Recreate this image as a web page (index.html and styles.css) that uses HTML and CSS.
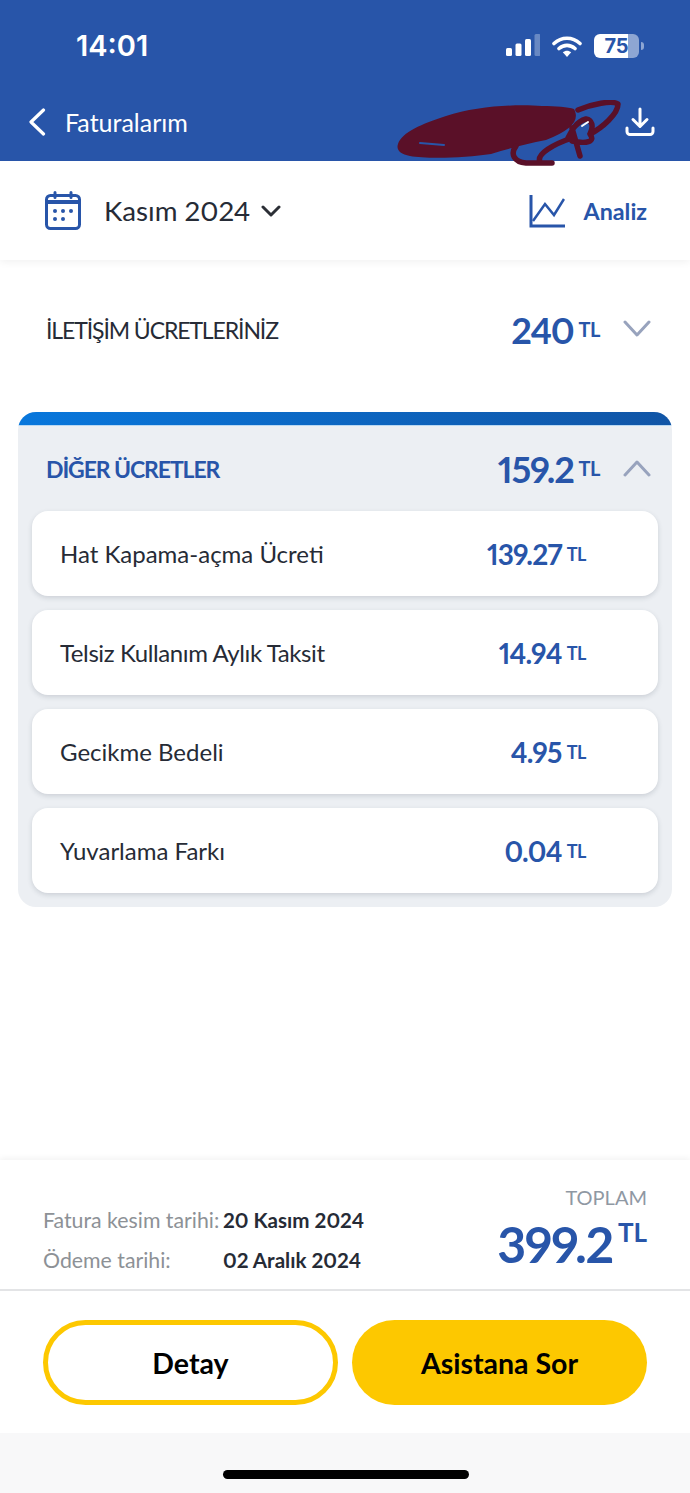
FILE: index.html
```html
<!DOCTYPE html>
<html lang="tr">
<head>
    <meta charset="UTF-8">
    <meta name="viewport" content="width=device-width, initial-scale=1.0">
    <title>Faturalarım</title>
    <link rel="stylesheet" href="styles.css">
</head>
<body>
    <div class="page">
        <header class="top">
            <div class="status">
                <span class="clock">14:01</span>
                <div class="status-icons">
                    <svg width="34" height="24" viewBox="0 0 34 24">
                        <rect x="0" y="14" width="6" height="8" rx="1.5" fill="#fff"/>
                        <rect x="9.5" y="9.5" width="6" height="12.500" rx="1.500" fill="#fff"/>
                        <rect x="19" y="5" width="6" height="17" rx="1.500" fill="#fff"/>
                        <rect x="28.500" y="0" width="6" height="22" rx="1.500" fill="#fff" opacity="0.3"/>
                    </svg>
                    <svg class="wifi" width="30" height="23" viewBox="0 0 30 23">
                        <path d="M2 8.500C9.500 1.500 20.500 1.500 28 8.500M7 13.500C11.800 9.300 18.200 9.300 23 13.500" fill="none" stroke="#fff" stroke-width="3.600" stroke-linecap="round"/>
                        <path d="M10.800 17.300C13.300 15.200 16.700 15.200 19.200 17.300L15 22z" fill="#fff"/>
                    </svg>
                    <div class="battery">
                        <span class="battery-level">75</span>
                        <i class="battery-tip"></i>
                    </div>
                </div>
            </div>
            <div class="nav">
                <svg class="back" width="18" height="28" viewBox="0 0 18 28">
                    <path d="M15.500 2L3 14l12.500 12" fill="none" stroke="#fff" stroke-width="3.200" stroke-linecap="round" stroke-linejoin="round"/>
                </svg>
                <span class="nav-title">Faturalarım</span>
                <svg class="download" width="30" height="30" viewBox="0 0 30 30">
                    <path d="M15 2v17M8 12.500l7 7 7-7M2 21v3.500a3 3 0 0 0 3 3h20a3 3 0 0 0 3-3V21" fill="none" stroke="#fff" stroke-width="3" stroke-linecap="round" stroke-linejoin="round"/>
                </svg>
            </div>
            <svg class="scribble" width="225" height="66" viewBox="0 0 225 66">
                <path d="M2 44C6 32 26 24 50 16C80 6 120 4 146 6C160 6 172 7 178 9C184 20 176 30 150 40C130 44 115 48 95 54C70 58 30 59 14 56C4 54 0 50 2 44z" fill="#5a1028"/>
                <path d="M182 10C196 4 216 0 222 4C222 14 206 28 194 34C198 26 196 20 190 19C180 22 176 30 172 38M194 34C200 42 190 44 176 41M176 28L184 56M120 46C114 54 118 62 130 63H156M144 62C140 54 158 44 176 38" fill="none" stroke="#5a1028" stroke-width="5.500" stroke-linecap="round" stroke-linejoin="round"/>
                <path d="M24 43L48 45" fill="none" stroke="#2855a9" stroke-width="2" stroke-linecap="round"/>
                <path d="M186 26L192 22" fill="none" stroke="#fff" stroke-width="2" stroke-linecap="round"/>
            </svg>
        </header>

        <section class="period">
            <div class="period-left">
                <svg width="36" height="40" viewBox="0 0 36 40">
                    <rect x="1.500" y="4.500" width="33" height="33" rx="4" fill="none" stroke="#2855a9" stroke-width="3"/>
                    <path d="M1.500 11h33" stroke="#2855a9" stroke-width="4"/>
                    <path d="M10 1.500v5M26 1.500v5" stroke="#2855a9" stroke-width="3" stroke-linecap="round"/>
                    <g fill="#2855a9">
                        <circle cx="10" cy="20" r="2"/><circle cx="18" cy="20" r="2"/><circle cx="26" cy="20" r="2"/>
                        <circle cx="10" cy="28" r="2"/><circle cx="18" cy="28" r="2"/>
                    </g>
                </svg>
                <span class="period-name">Kasım 2024</span>
                <svg width="20" height="12" viewBox="0 0 20 12">
                    <path d="M2 2l8 8 8-8" fill="none" stroke="#2c2f36" stroke-width="3" stroke-linecap="round" stroke-linejoin="round"/>
                </svg>
            </div>
            <div class="period-right">
                <svg width="36" height="34" viewBox="0 0 36 34">
                    <path d="M2 1v31h34" fill="none" stroke="#2855a9" stroke-width="3"/>
                    <path d="M4 27L16 10l9 11L35 5" fill="none" stroke="#2855a9" stroke-width="2.500"/>
                </svg>
                <span class="analiz">Analiz</span>
            </div>
        </section>

        <section class="fee-row">
            <span class="fee-title">İLETİŞİM ÜCRETLERİNİZ</span>
            <div class="fee-total">
                <span class="amount-big">240</span><span class="tl">TL</span>
                <svg class="chev" width="28" height="18" viewBox="0 0 28 18">
                    <path d="M2 2l12 13L26 2" fill="none" stroke="#98a3bd" stroke-width="3" stroke-linecap="round" stroke-linejoin="round"/>
                </svg>
            </div>
        </section>

        <section class="card">
            <div class="card-strip"></div>
            <div class="card-head">
                <span class="card-title">DİĞER ÜCRETLER</span>
                <div class="fee-total">
                    <span class="amount-big">159.2</span><span class="tl">TL</span>
                    <svg class="chev" width="28" height="18" viewBox="0 0 28 18">
                        <path d="M2 16L14 3l12 13" fill="none" stroke="#98a3bd" stroke-width="3" stroke-linecap="round" stroke-linejoin="round"/>
                    </svg>
                </div>
            </div>
            <div class="items">
                <div class="item">
                    <span class="item-name">Hat Kapama-açma Ücreti</span>
                    <div><span class="item-amount">139.27</span><span class="item-tl">TL</span></div>
                </div>
                <div class="item">
                    <span class="item-name item-name-tight">Telsiz Kullanım Aylık Taksit</span>
                    <div><span class="item-amount">14.94</span><span class="item-tl">TL</span></div>
                </div>
                <div class="item">
                    <span class="item-name">Gecikme Bedeli</span>
                    <div><span class="item-amount">4.95</span><span class="item-tl">TL</span></div>
                </div>
                <div class="item">
                    <span class="item-name">Yuvarlama Farkı</span>
                    <div><span class="item-amount">0.04</span><span class="item-tl">TL</span></div>
                </div>
            </div>
        </section>

        <footer class="summary">
            <div class="summary-top">
                <div class="dates">
                    <div class="date-row"><span class="date-label">Fatura kesim tarihi:</span><span class="date-value">20 Kasım 2024</span></div>
                    <div class="date-row"><span class="date-label">Ödeme tarihi:</span><span class="date-value">02 Aralık 2024</span></div>
                </div>
                <div class="total">
                    <div class="total-label">TOPLAM</div>
                    <div class="total-value"><span class="total-num">399.2</span><span class="total-tl">TL</span></div>
                </div>
            </div>
            <div class="buttons">
                <button type="button" class="btn btn-outline">Detay</button>
                <button type="button" class="btn btn-fill">Asistana Sor</button>
            </div>
        </footer>

        <div class="home-area"><div class="home-bar"></div></div>
    </div>
</body>
</html>
```

FILE: styles.css
```css
* {
    box-sizing: border-box;
}
html, body {
    margin: 0;
    padding: 0;
}
body {
    font-family: Lato, "Open Sans", sans-serif;
    font-variant-numeric: proportional-nums;
    background: #fff;
    color: #262b36;
}
.page {
    width: 690px;
    height: 1493px;
    display: flex;
    flex-direction: column;
    position: relative;
    overflow: hidden;
}
.top {
    height: 161px;
    flex-shrink: 0;
    background: #2855a9;
    color: #fff;
    position: relative;
}
.status {
    height: 92px;
    padding: 28px 46px 0 76px;
    display: flex;
    justify-content: space-between;
    align-items: flex-start;
}
.clock {
    font-family: Inter, sans-serif;
    font-size: 29px;
    line-height: 36px;
    font-weight: 600;
}
.status-icons {
    display: flex;
    align-items: center;
    gap: 12px;
    padding-top: 6px;
}
.battery {
    display: flex;
    align-items: center;
    gap: 2px;
}
.battery-level {
    width: 45px;
    height: 24px;
    border-radius: 6px;
    background: linear-gradient(90deg, #fff 75%, #8ea6d3 75%);
    color: #2855a9;
    font-family: Inter, sans-serif;
    font-size: 20px;
    line-height: 24px;
    font-weight: 700;
    text-align: center;
}
.battery-tip {
    width: 3px;
    height: 8px;
    border-radius: 0 3px 3px 0;
    background: #8ea6d3;
}
.nav {
    height: 60px;
    padding: 0 35px 0 28px;
    display: flex;
    align-items: center;
}
.back {
    margin-right: 19px;
}
.nav-title {
    font-size: 25px;
    flex: 1;
}
.scribble {
    position: absolute;
    left: 396px;
    top: 100px;
    z-index: 2;
}
.period {
    height: 99px;
    flex-shrink: 0;
    padding: 0 43px 0 45px;
    display: flex;
    justify-content: space-between;
    align-items: center;
    background: #fff;
    box-shadow: 0 2px 8px rgba(0, 0, 0, 0.06);
}
.period-left, .period-right {
    display: flex;
    align-items: center;
}
.period-name {
    font-size: 27.700px;
    margin: 0 11px 0 23px;
}
.analiz {
    color: #2855a9;
    font-size: 23.300px;
    font-weight: 700;
    margin-left: 18px;
}
.fee-row {
    height: 152px;
    flex-shrink: 0;
    padding: 0 39px 12px 46px;
    display: flex;
    justify-content: space-between;
    align-items: center;
}
.fee-title {
    font-size: 23px;
    letter-spacing: -1.100px;
    color: #262b36;
}
.fee-total {
    display: flex;
    align-items: flex-start;
}
.amount-big {
    color: #2855a9;
    font-size: 36px;
    line-height: 40px;
    font-weight: 700;
    letter-spacing: -1.200px;
}
.tl {
    color: #2855a9;
    font-size: 20px;
    line-height: 38px;
    font-weight: 700;
    letter-spacing: -0.5px;
    margin-left: 5px;
}
.chev {
    margin: 10px 0 0 23px;
}
.card {
    width: 654px;
    height: 495px;
    flex-shrink: 0;
    margin-left: 18px;
    border-radius: 18px;
    background: #eceff3;
    overflow: hidden;
}
.card-strip {
    height: 14px;
    background: linear-gradient(90deg, #0877dc, #1155a6);
    border-bottom: 1px solid #b9d8f2;
}
.card-head {
    height: 85px;
    padding: 0 21px 0 28px;
    display: flex;
    justify-content: space-between;
    align-items: center;
}
.card-title {
    color: #2855a9;
    font-size: 23px;
    font-weight: 700;
    letter-spacing: -1.100px;
}
.items {
    padding: 0 14px;
    display: flex;
    flex-direction: column;
    gap: 14px;
}
.item {
    height: 85px;
    padding: 0 72px 0 28px;
    background: #fff;
    border-radius: 16px;
    box-shadow: 0 2px 5px rgba(40, 50, 70, 0.16);
    display: flex;
    justify-content: space-between;
    align-items: center;
}
.item-name {
    font-size: 24px;
}
.item-name-tight {
    letter-spacing: -0.4px;
}
.item-amount {
    color: #2855a9;
    font-size: 28px;
    font-weight: 700;
    letter-spacing: -0.8px;
}
.item-tl {
    color: #2855a9;
    font-size: 18px;
    font-weight: 700;
    letter-spacing: -0.4px;
    margin-left: 5px;
    vertical-align: 4px;
}
.summary {
    position: absolute;
    left: 0;
    right: 0;
    top: 1160px;
    height: 273px;
    background: #fff;
    box-shadow: 0 -2px 6px rgba(0, 0, 0, 0.05);
}
.summary-top {
    height: 131px;
    padding: 0 43px;
    display: flex;
    justify-content: space-between;
    border-bottom: 2px solid #e3e4e6;
}
.dates {
    padding-top: 50px;
    display: flex;
    flex-direction: column;
    gap: 20px;
}
.date-row {
    display: flex;
    font-size: 20.600px;
    line-height: 20px;
}
.date-label {
    width: 180px;
    color: #8d9196;
    font-size: 21.300px;
}
.date-value {
    font-weight: 700;
}
.total {
    text-align: right;
    padding-top: 26px;
}
.total-label {
    color: #8f98a3;
    font-size: 20px;
    line-height: 22px;
}
.total-value {
    display: flex;
    align-items: flex-start;
    color: #2855a9;
    font-weight: 700;
    margin-top: 6px;
}
.total-num {
    font-size: 50px;
    line-height: 60px;
    letter-spacing: -1.300px;
}
.total-tl {
    font-size: 26px;
    line-height: 36px;
    margin-left: 5px;
}
.buttons {
    padding: 29px 43px 0;
    display: flex;
    justify-content: space-between;
}
.btn {
    width: 295px;
    height: 85px;
    border-radius: 43px;
    font-family: inherit;
    font-size: 28.500px;
    font-weight: 700;
    color: #000;
    cursor: pointer;
}
.btn-outline {
    background: #fff;
    border: 5px solid #fdc800;
}
.btn-fill {
    background: #fdc800;
    border: none;
}
.home-area {
    position: absolute;
    left: 0;
    right: 0;
    top: 1433px;
    height: 60px;
    background: #f8f8f9;
}
.home-bar {
    width: 246px;
    height: 9px;
    margin: 37px 0 0 223px;
    border-radius: 5px;
    background: #000;
}
```
